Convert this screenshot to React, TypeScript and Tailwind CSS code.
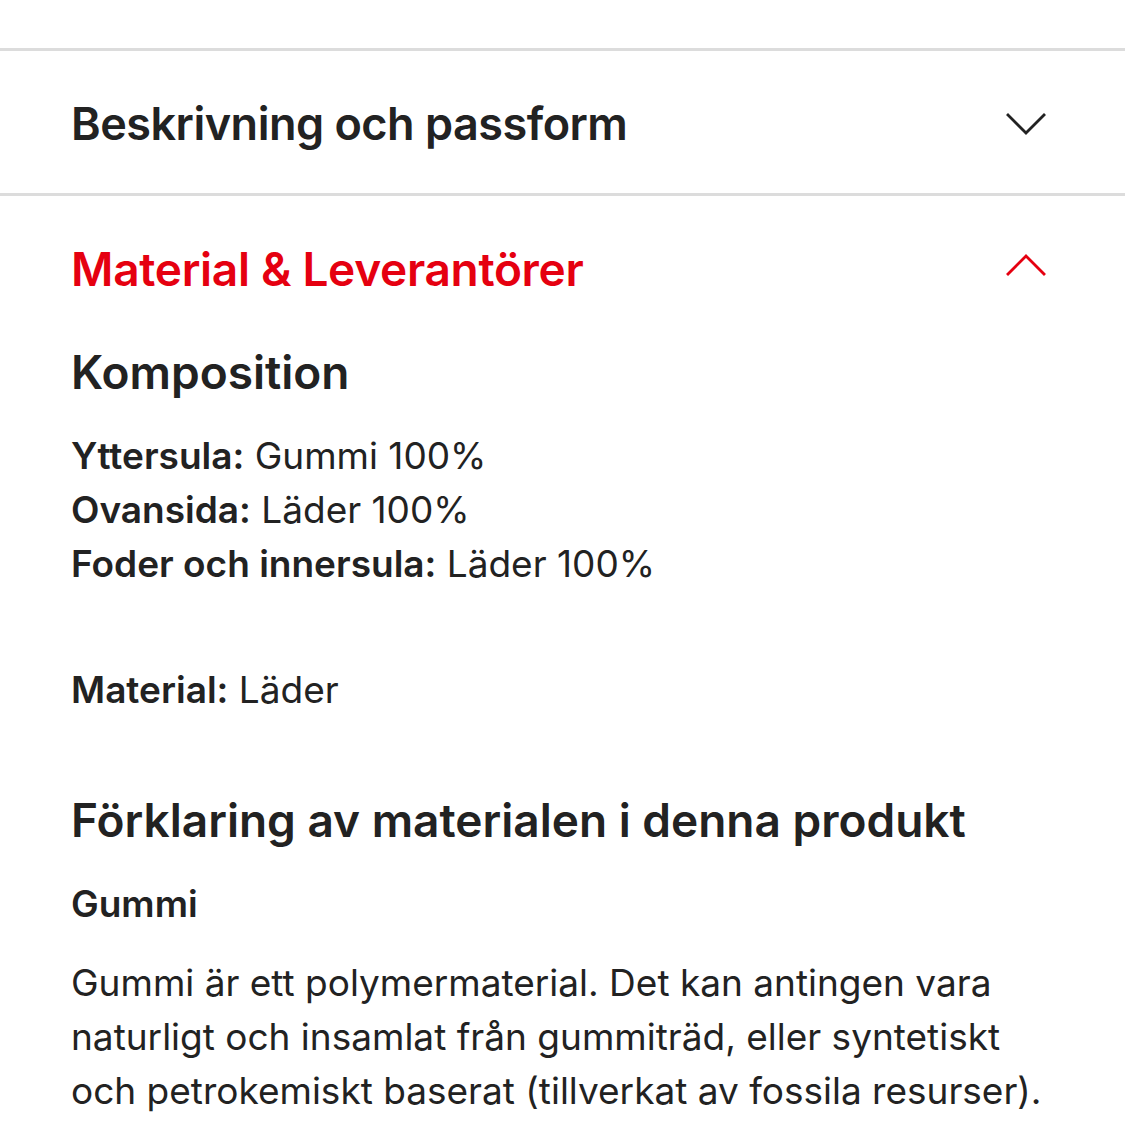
import { useState } from "react";

const Chevron = ({ up, className }: { up?: boolean; className?: string }) => (
  <svg
    viewBox="0 0 40 24"
    className={className}
    fill="none"
    stroke="currentColor"
    strokeWidth={2.8}
    strokeLinecap="square"
  >
    {up ? <path d="M2 21 L20 3 L38 21" /> : <path d="M2 3 L20 21 L38 3" />}
  </svg>
);

const compositions = [
  { label: "Yttersula:", value: "Gummi 100%" },
  { label: "Ovansida:", value: "Läder 100%" },
  { label: "Foder och innersula:", value: "Läder 100%" },
];

const App = () => {
  const [open, setOpen] = useState<boolean>(true);

  return (
    <div
      className="min-h-[1125px] bg-white text-[#222222]"
      style={{ fontFamily: "Inter, 'Noto Sans', sans-serif" }}
    >
      <div className="h-[48px]" />
      <div className="border-t-[3px] border-[#dcdcdc]">
        <button
          type="button"
          className="flex h-[142px] w-full items-center justify-between pl-[71px] pr-[79px] pt-[4px] text-left"
        >
          <span className="text-[45px] leading-[56px] font-semibold tracking-[-0.5px]">
            Beskrivning och passform
          </span>
          <Chevron className="h-[24px] w-[40px] text-[#222222]" />
        </button>
      </div>
      <div className="border-t-[3px] border-[#dcdcdc]">
        <button
          type="button"
          onClick={() => setOpen(!open)}
          className="flex w-full items-center justify-between pt-[45px] pl-[71px] pr-[79px] text-left"
        >
          <span className="text-[46px] leading-[56px] font-semibold tracking-[-0.3px] text-[#e50010]">
            Material &amp; Leverantörer
          </span>
          <Chevron
            up={open}
            className="mb-[8px] h-[24px] w-[40px] text-[#e50010]"
          />
        </button>

        {open && (
          <div className="px-[71px]">
            <h3 className="mt-[47px] text-[46px] leading-[56px] font-semibold">
              Komposition
            </h3>
            <div className="mt-[29px] text-[37px] leading-[54px]">
              {compositions.map((val, index) => (
                <p key={index}>
                  <span className="font-semibold">{val.label}</span>{" "}
                  {val.value}
                </p>
              ))}
            </div>
            <p className="mt-[72px] text-[37px] leading-[54px]">
              <span className="font-semibold">Material:</span> Läder
            </p>

            <h3 className="mt-[75px] text-[46px] leading-[56px] font-semibold">
              Förklaring av materialen i denna produkt
            </h3>
            <h4 className="mt-[29px] text-[37px] leading-[54px] font-semibold">
              Gummi
            </h4>
            <p className="mt-[25px] text-[37px] leading-[54px]">
              Gummi är ett polymermaterial. Det kan antingen vara naturligt och
              insamlat från gummiträd, eller syntetiskt och petrokemiskt
              baserat (tillverkat av fossila resurser).
            </p>
          </div>
        )}
      </div>
    </div>
  );
};

export default App;
